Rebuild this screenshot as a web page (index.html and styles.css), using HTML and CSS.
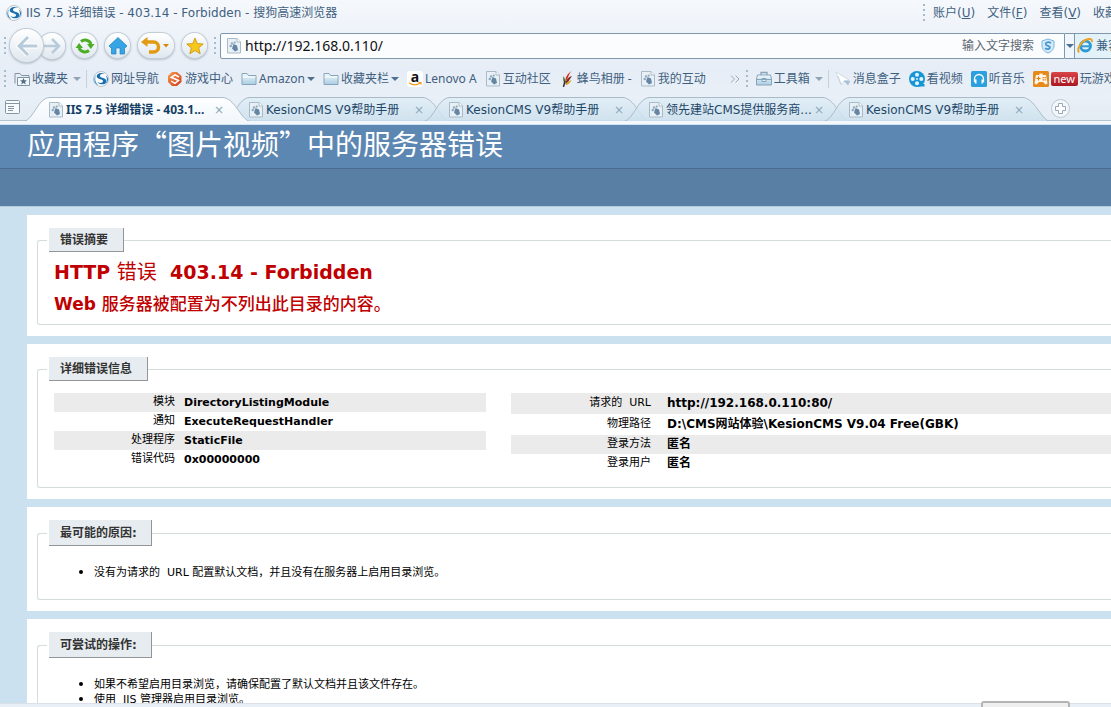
FILE: index.html
```html
<!DOCTYPE html>
<html lang="zh-CN">
<head>
<meta charset="utf-8">
<title>IIS 7.5 详细错误 - 403.14 - Forbidden</title>
<link rel="stylesheet" href="styles.css">
</head>
<body>
<svg class="defs" width="0" height="0" aria-hidden="true">
  <defs>
    <linearGradient id="fold" x1="0" y1="0" x2="0" y2="1"><stop offset="0" stop-color="#f2f9fd"/><stop offset="1" stop-color="#a9cde2"/></linearGradient>
    <linearGradient id="ball" x1="0" y1="0" x2="1" y2="1"><stop offset="0" stop-color="#f79a4c"/><stop offset="1" stop-color="#cf3a1c"/></linearGradient>
    <linearGradient id="tabfill" x1="0" y1="0" x2="0" y2="1"><stop offset="0" stop-color="#dfeef6"/><stop offset="1" stop-color="#cbe0ed"/></linearGradient>
    <linearGradient id="tabon" x1="0" y1="0" x2="0" y2="1"><stop offset="0" stop-color="#fdfeff"/><stop offset="1" stop-color="#f2f7fc"/></linearGradient>
    <symbol id="doc" viewBox="0 0 16 16">
      <path d="M1.500 .5h9.500l3.500 3.500v11h-13z" fill="#e9f0f5" stroke="#a9bac8"/>
      <path d="M11 .5v3.500h3.500" fill="#fff" stroke="#a9bac8"/>
      <path d="M7.500 6l3.500 1.500 1 4.500-3 1.500-3-3z" fill="#6485a3"/>
      <circle cx="4.800" cy="8" r="1.300" fill="#8fa9bf"/><circle cx="6" cy="5.400" r="1.200" fill="#8fa9bf"/><circle cx="8.700" cy="4.600" r="1.100" fill="#8fa9bf"/>
    </symbol>
    <symbol id="folder" viewBox="0 0 16 16">
      <path d="M1 13.500V2.500h5l1.500 2H15v9z" fill="url(#fold)" stroke="#86a5ba"/>
      <path d="M1.500 6h13" stroke="#fff"/>
    </symbol>
    <symbol id="sogou" viewBox="0 0 16 16">
      <circle cx="8" cy="8" r="7.500" fill="#fafcfd" stroke="#a8b5bf" stroke-width=".8"/>
      <path d="M12.500 3C8 .8 3.500 2.500 3.700 5.500c.2 3.500 7 2 6.300 5-.3 1.400-2.500 2-5.500.5 1.500 3 8.500 3.500 8.800-.8C13.500 6.200 7 7.500 7 4.700c0-1.700 3-2.200 5.500-1.700z" fill="#1b6fae"/>
      <path d="M3 4C0 8 1.500 13 5 14c-3-3-3.500-6-2-10zM12.500 4.500c2 2.500 2 6-.5 8.500 4-2 4-7 .5-8.500z" fill="#2a82c0"/>
    </symbol>
  </defs>
</svg>

<header class="chrome">
  <div class="titlebar">
    <svg class="ico"><use href="#sogou"/></svg>
    <span class="window-title">IIS 7.5 详细错误 - 403.14 - Forbidden - 搜狗高速浏览器</span>
    <nav class="menu">
      <i class="grip"></i>
      <button>账户(<u>U</u>)</button><button>文件(<u>F</u>)</button><button>查看(<u>V</u>)</button><button>收藏</button>
    </nav>
  </div>

  <div class="navbar">
    <i class="grip tall"></i>
    <div class="history">
      <button class="back" aria-label="后退"><svg width="26" height="26" viewBox="0 0 26 26"><path d="M14 4L5 13l9 9M6 13h17" fill="none" stroke="#fff" stroke-width="5"/><path d="M14 4L5 13l9 9M6 13h17" fill="none" stroke="#b7cbda" stroke-width="3"/></svg></button>
      <button class="forward" aria-label="前进"><svg width="18" height="18" viewBox="0 0 18 18"><path d="M9 2l7 7-7 7M15 9H1" fill="none" stroke="#b7cbda" stroke-width="2.500"/></svg></button>
    </div>
    <button class="round" aria-label="刷新"><svg width="20" height="20" viewBox="0 0 20 20"><path d="M6 5.500A6.500 6.500 0 0 1 16 8" fill="none" stroke="#4aad25" stroke-width="3"/><path d="M12 8h7.500l-3.700 5z" fill="#4aad25"/><path d="M14 14.500A6.500 6.500 0 0 1 4 12" fill="none" stroke="#4aad25" stroke-width="3"/><path d="M8 12H.5l3.700-5z" fill="#4aad25"/></svg></button>
    <button class="round" aria-label="主页"><svg width="20" height="20" viewBox="0 0 20 20"><path d="M10 1.500L19 10l-1.500 1.500H16.500V18h-4.500v-6H8v6H3.500v-6.500H2.500L1 10z" fill="#36a5e6" stroke="#1b7fc0" stroke-width=".7"/></svg></button>
    <button class="round wide" aria-label="撤销"><svg width="32" height="20" viewBox="0 0 32 20"><path d="M6 6h7.500a4.500 4.500 0 0 1 0 10H9" fill="none" stroke="#e39a12" stroke-width="3.500"/><path d="M1 6l6.500-5v10z" fill="#e39a12"/><path d="M23 8h6l-3 3.500z" fill="#d78a10"/></svg></button>
    <button class="round" aria-label="收藏"><svg width="20" height="20" viewBox="0 0 20 20"><path d="M10 2l2.300 5.600 6 .4-4.600 3.900 1.500 5.900L10 14.500l-5.200 3.300 1.500-5.900L1.700 8l6-.4z" fill="#f6c81c" stroke="#c98f0a" stroke-width=".8"/></svg></button>
    <i class="grip tall"></i>
    <div class="address">
      <svg class="ico"><use href="#doc"/></svg>
      <input class="url" aria-label="地址" value="http://192.168.0.110/">
      <span class="hint">输入文字搜索</span>
      <svg class="ico" viewBox="0 0 16 16"><path d="M8 1l6 2v5c0 3.500-3 6-6 7-3-1-6-3.500-6-7V3z" fill="#d5eaf8" stroke="#7db5dd"/><path d="M11 5C8.500 3.500 5.500 4.300 5.700 6.200 6 8.300 10 7.600 10 9.600c0 1.600-2.700 1.900-5 .7" fill="none" stroke="#4598d2" stroke-width="1.800"/></svg>
    </div>
    <button class="drop" aria-label="地址列表"><i class="caret"></i></button>
    <button class="compat"><svg class="ico" viewBox="0 0 16 16"><circle cx="8.500" cy="8" r="5" fill="none" stroke="#2d9ad8" stroke-width="2.800"/><path d="M5 8.300h8" stroke="#2d9ad8" stroke-width="2"/><path d="M2 14.500C-.5 11 4 3.500 9.500 1.500 13 .3 15.500 1 14.800 4" fill="none" stroke="#eda326" stroke-width="2"/></svg>兼容</button>
  </div>

  <div class="bookmarks">
    <i class="grip"></i>
    <button class="mark fav"><svg class="ico" viewBox="0 0 16 16"><path d="M1 12.500V2.500h5l1.500 2H15V14H3" fill="none" stroke="#7f93a5"/><path d="M3.500 6.500h12v8h-12z" fill="#f3f8fb" stroke="#7f93a5"/><path d="M9.500 7l1 2.300 2.500.1-2 1.600.8 2.500-2.300-1.400-2.300 1.400.8-2.500-2-1.600 2.500-.1z" fill="#4f6b85"/></svg>收藏夹<i class="caret soft"></i></button>
    <i class="sep"></i>
    <button class="mark"><svg class="ico"><use href="#sogou"/></svg>网址导航</button>
    <button class="mark"><svg class="ico" viewBox="0 0 16 16"><path d="M5 1h5l4.500 4v6L10 15H5L1 11V5z" fill="url(#ball)"/><path d="M12 6L8 3.800 4.200 6.300 11.500 9.500 8 12.300 4.200 10.200" fill="none" stroke="#fff" stroke-width="1.500"/></svg>游戏中心</button>
    <button class="mark"><svg class="ico"><use href="#folder"/></svg>Amazon<i class="caret"></i></button>
    <button class="mark"><svg class="ico"><use href="#folder"/></svg>收藏夹栏<i class="caret"></i></button>
    <button class="mark"><span class="amazon">a<svg width="14" height="4" viewBox="0 0 14 4"><path d="M1 .8c3.500 2.500 8 2.500 11 .3M10.500 .5h2.500v2" fill="none" stroke="#f39a1c" stroke-width="1.300"/></svg></span>Lenovo A</button>
    <button class="mark"><svg class="ico"><use href="#doc"/></svg>互动社区</button>
    <button class="mark"><svg class="ico" viewBox="0 0 16 16"><path d="M12.500 0C8 3 6 7 6.500 11 9 8 9 4 12.500 0z" fill="#d9261c"/><path d="M13 5C9 6 7 9 6.500 13c3-1 4-5 6.500-8z" fill="#7b2a20"/><path d="M12.500 9.500C9 9.500 7 12 6.500 14c3 0 4-2 6-4.500z" fill="#d9a12a"/><path d="M4.500 5c-1 4 0 6 1.500 8 1-3 0-5-1.500-8z" fill="#4d7a2d"/><path d="M6 10l-1.500 6" stroke="#333" stroke-width="1.500"/></svg>蜂鸟相册 -</button>
    <button class="mark"><svg class="ico"><use href="#doc"/></svg>我的互动</button>
    <button class="more" aria-label="更多"><svg width="10" height="8" viewBox="0 0 10 8"><path d="M1 .5L4.500 4 1 7.500M5.500 .5L9 4 5.500 7.500" fill="none" stroke="#98a9b8"/></svg></button>
    <i class="grip"></i>
    <button class="mark fav"><svg class="ico" viewBox="0 0 16 16"><path d="M5 4V1.500h6V4" fill="none" stroke="#86a5ba" stroke-width="1.300"/><path d="M1.500 4h13l1 4v6H.5V8z" fill="url(#fold)" stroke="#86a5ba"/><path d="M.5 8.500h15M6 7.500h4v3H6z" fill="#e6f2f9" stroke="#86a5ba"/></svg>工具箱<i class="caret soft"></i></button>
    <i class="sep"></i>
    <button class="mark"><svg class="ico" viewBox="0 0 16 16"><path d="M1 1l13 8-5 1-3 4z" fill="#fff" stroke="#c3d1dc" stroke-width=".7"/><path d="M3 5l3 8M9 10l4 4 2-4z" fill="#a9c2d5" stroke="#a9c2d5" stroke-width=".6"/></svg>消息盒子</button>
    <button class="mark"><svg class="ico" viewBox="0 0 16 16"><circle cx="8" cy="8" r="8" fill="#1795d4"/><path d="M9 13h6.500v2.500H9z" fill="#1795d4"/><g fill="#e5f5fd"><circle cx="8" cy="3.700" r="2"/><circle cx="8" cy="12.300" r="2"/><circle cx="3.700" cy="8" r="2"/><circle cx="12.300" cy="8" r="2"/><circle cx="8" cy="8" r=".9"/></g></svg>看视频</button>
    <button class="mark"><svg class="ico" viewBox="0 0 16 16"><rect width="16" height="16" rx="1.500" fill="#2ba0de"/><path d="M3.500 11V8a4.500 4.500 0 0 1 9 0v3" fill="none" stroke="#fff" stroke-width="1.300"/><path d="M3 8.500h2.500v4H4zM13 8.500h-2.500v4H12z" fill="#fff"/></svg>听音乐</button>
    <button class="mark"><svg class="ico" viewBox="0 0 16 16"><rect width="16" height="16" rx="1.500" fill="#e58a1b"/><path d="M3 4h3l.8-1.500h2.400L10 4h3l1.500 8.500-2 1-2.500-2.500H6L3.500 13.500l-2-1z" fill="#fff6e6"/><path d="M3.500 7.500h4M5.500 5.500v4" stroke="#e07c10" stroke-width="1.200"/><path d="M9.500 6h1.300v1.300H9.500zM11.500 6h1.300v1.300h-1.300zM9.500 8.200h1.300v1.300H9.500zM11.500 8.200h1.300v1.300h-1.300z" fill="#e07c10"/></svg><span class="new">new</span>玩游戏</button>
  </div>

  <div class="tabs">
    <button class="tablist" aria-label="标签列表"><svg width="15" height="14" viewBox="0 0 15 14"><rect x=".5" y=".5" width="14" height="13" rx="1" fill="#f8fbfd" stroke="#8496a6"/><path d="M1 3.500h13M3 6.500h6M3 8.500h6M3 10.500h5" stroke="#8496a6"/></svg></button>
    <div class="tab on"><svg class="shape" viewBox="0 0 226 25" preserveAspectRatio="none"><path d="M0 24.500C10 22 14 .5 26 .5H198C211 .5 216 22 226 24.500"/></svg><svg class="ico"><use href="#doc"/></svg><span class="label">IIS 7.5 详细错误 - 403.1...</span><button class="close" aria-label="关闭">×</button></div>
    <div class="tab"><svg class="shape" viewBox="0 0 226 25" preserveAspectRatio="none"><path d="M0 24.500C10 22 14 .5 26 .5H198C211 .5 216 22 226 24.500"/></svg><svg class="ico"><use href="#doc"/></svg><span class="label">KesionCMS V9帮助手册</span><button class="close" aria-label="关闭">×</button></div>
    <div class="tab"><svg class="shape" viewBox="0 0 226 25" preserveAspectRatio="none"><path d="M0 24.500C10 22 14 .5 26 .5H198C211 .5 216 22 226 24.500"/></svg><svg class="ico"><use href="#doc"/></svg><span class="label">KesionCMS V9帮助手册</span><button class="close" aria-label="关闭">×</button></div>
    <div class="tab"><svg class="shape" viewBox="0 0 226 25" preserveAspectRatio="none"><path d="M0 24.500C10 22 14 .5 26 .5H198C211 .5 216 22 226 24.500"/></svg><svg class="ico"><use href="#doc"/></svg><span class="label">领先建站CMS提供服务商...</span><button class="close" aria-label="关闭">×</button></div>
    <div class="tab"><svg class="shape" viewBox="0 0 226 25" preserveAspectRatio="none"><path d="M0 24.500C10 22 14 .5 26 .5H198C211 .5 216 22 226 24.500"/></svg><svg class="ico"><use href="#doc"/></svg><span class="label">KesionCMS V9帮助手册</span><button class="close" aria-label="关闭">×</button></div>
    <button class="newtab" aria-label="新标签"><svg width="19" height="19" viewBox="0 0 19 19"><circle cx="9.500" cy="9.500" r="9" fill="#f3f7fa" stroke="#bcc8d2"/><path d="M7.500 4.500h4v3h3v4h-3v3h-4v-3h-3v-4h3z" fill="#fff" stroke="#98a9b8"/></svg></button>
  </div>
</header>

<main class="page">
  <div class="banner"><h1>应用程序“图片视频”中的服务器错误</h1></div>
  <div class="subbar"></div>
  <div class="content">
    <section class="card">
      <fieldset class="box">
        <legend>错误摘要</legend>
        <h2>HTTP <span class="cjk">错误</span>&nbsp; 403.14 - Forbidden</h2>
        <h3>Web <span class="cjk">服务器被配置为不列出此目录的内容。</span></h3>
      </fieldset>
    </section>
    <section class="card">
      <fieldset class="box">
        <legend>详细错误信息</legend>
        <div class="details">
          <table class="first">
            <tr class="alt"><th scope="row">模块</th><td>DirectoryListingModule</td></tr>
            <tr><th scope="row">通知</th><td>ExecuteRequestHandler</td></tr>
            <tr class="alt"><th scope="row">处理程序</th><td>StaticFile</td></tr>
            <tr><th scope="row">错误代码</th><td>0x00000000</td></tr>
          </table>
          <table class="second">
            <tr class="alt roomy"><th scope="row">请求的&nbsp; URL</th><td>http://192.168.0.110:80/</td></tr>
            <tr class="roomy"><th scope="row">物理路径</th><td>D:\CMS网站体验\KesionCMS V9.04 Free(GBK)</td></tr>
            <tr class="alt"><th scope="row">登录方法</th><td>匿名</td></tr>
            <tr><th scope="row">登录用户</th><td>匿名</td></tr>
          </table>
        </div>
      </fieldset>
    </section>
    <section class="card">
      <fieldset class="box">
        <legend class="high">最可能的原因:</legend>
        <ul><li>没有为请求的&nbsp; URL 配置默认文档，并且没有在服务器上启用目录浏览。</li></ul>
      </fieldset>
    </section>
    <section class="card">
      <fieldset class="box">
        <legend class="high">可尝试的操作:</legend>
        <ul><li>如果不希望启用目录浏览，请确保配置了默认文档并且该文件存在。</li><li>使用&nbsp; IIS 管理器启用目录浏览。</li></ul>
      </fieldset>
    </section>
  </div>
</main>
<footer class="status"><div class="popup"></div></footer>
</body>
</html>
```

FILE: styles.css
```css
* { box-sizing: border-box; }
body {
  margin: 0;
  height: 100vh;
  overflow: hidden;
  display: flex;
  flex-direction: column;
  font: 12px/16px "Noto Sans", "Noto Sans CJK SC", sans-serif;
  color: #3f5f80;
}
button {
  border: 0;
  padding: 0;
  background: none;
  font: inherit;
  color: inherit;
  white-space: nowrap;
  flex: none;
}
.defs { position: absolute; }
.ico { width: 16px; height: 16px; flex: none; }

/* browser chrome */
.chrome {
  flex: none;
  background: linear-gradient(#f5f8fc, #e6edf6 70px, #e9f0f7 96px, #e2ebf3);
  border-bottom: 1px solid #cfe3f2;
}
.grip {
  flex: none;
  width: 2px;
  height: 18px;
  background: repeating-linear-gradient(#a3bccb 0 2px, transparent 2px 5px);
}
.sep { flex: none; width: 1px; height: 18px; background: #c5d1dc; }
.caret {
  flex: none;
  border: 4px solid transparent;
  border-top-color: #4f6f8e;
  border-bottom: 0;
}
.soft { border-top-color: #92a4b4; margin-left: 3px; }

.titlebar, .tabs { font-family: "DejaVu Sans", "Noto Sans CJK SC", sans-serif; }
.titlebar { display: flex; align-items: center; height: 26px; padding-left: 6px; gap: 4px; overflow: hidden; }
.window-title { flex: 1; white-space: nowrap; }
.menu { display: flex; align-items: center; gap: 12px; width: 188px; flex: none; }
.menu .grip { margin-right: -4px; }

.navbar { display: flex; align-items: center; height: 39px; padding-left: 4px; overflow: hidden; }
.history { display: flex; align-items: center; margin: 0 7px 0 4px; }
.back, .forward, .round {
  display: flex;
  align-items: center;
  justify-content: center;
  border-radius: 17px;
  background: linear-gradient(#fff, #dfe8ef);
  box-shadow: 0 0 0 1px #c3cdd6, 0 1px 3px #8594a3;
}
.back { width: 33px; height: 33px; position: relative; z-index: 1; }
.forward { width: 26px; height: 26px; margin-left: -4px; }
.round { width: 25px; height: 25px; margin-right: 8px; }
.wide { width: 36px; }
.navbar .round + .grip { margin: 0 4px 0 -1px; }
.address {
  flex: 1;
  display: flex;
  align-items: center;
  gap: 3px;
  height: 26px;
  padding: 0 8px 0 5px;
  border: 1px solid #7e97ac;
  border-radius: 2px 0 0 2px;
  background: #fafcfe;
}
.url { flex: 1; min-width: 0; border: 0; padding: 0; background: none; color: #111; font: 14px/20px "Noto Sans", sans-serif; outline: 0; }
.hint { color: #5c6670; margin-right: 3px; }
.drop { width: 10px; height: 26px; border: 1px solid #7e97ac; border-left: 0; display: flex; align-items: center; justify-content: center; background: #f0f6fb; }
.compat { display: flex; align-items: center; gap: 3px; width: 36px; height: 26px; padding-left: 2px; border: solid #7e97ac; border-width: 1px 0; background: #e3f1f8; overflow: hidden; }

.bookmarks { display: flex; align-items: center; gap: 8px; height: 27px; padding-left: 4px; overflow: hidden; }
.mark { display: flex; align-items: center; gap: 2px; }
.fav { margin-right: -3px; }
.bookmarks .sep { margin-right: -2px; }
.more { margin-left: 16px; margin-right: -2px; display: flex; }
.amazon {
  width: 16px;
  height: 16px;
  border-radius: 3px;
  background: #fff;
  color: #111;
  font: bold 14px/11px "Noto Sans", sans-serif;
  display: flex;
  flex-direction: column;
  align-items: center;
}
.new {
  width: 27px;
  border-radius: 2px;
  background: linear-gradient(#d8464a, #a91720);
  color: #fff;
  font-size: 11px;
  line-height: 14px;
  text-align: center;
}

.tabs { display: flex; height: 32px; padding-top: 5px; border-bottom: 3px solid #f3f7fc; background: linear-gradient(transparent 28px, #b3c2cf 28px); overflow: hidden; }
.tablist { display: flex; margin: 3px 4px 0 5px; height: 14px; }
.tab {
  position: relative;
  flex: none;
  display: flex;
  align-items: center;
  gap: 2px;
  width: 200px;
  height: 24px;
  padding: 2px 0 0 24px;
  color: #1f4668;
}
.shape { position: absolute; left: 0; top: 0; width: 226px; height: 25px; fill: url(#tabfill); fill-opacity: .8; stroke: #aabac8; }
.tab .ico, .label, .close { position: relative; }
.on { z-index: 1; color: #123d63; }
.on .shape { fill: url(#tabon); fill-opacity: 1; }
.on .label { font-family: "Noto Sans", "Noto Sans CJK SC", sans-serif; font-weight: bold; }
.label { flex: 1; white-space: nowrap; }
.close { width: 10px; font-size: 12px; color: #8aa7bb; }
.newtab { margin: 2px 0 0 27px; height: 19px; }

/* error page */
.page {
  flex: 1;
  min-height: 0;
  overflow: hidden;
  background: #cbe1ef;
  color: #000;
  font: 11px/15px "DejaVu Sans", "Noto Sans CJK SC", sans-serif;
}
.banner { height: 44px; padding-left: 27px; background: #5c87b2; border-bottom: 1px solid #4b6c90; }
.banner h1 { margin: 0; color: #fff; font: 400 28px/37px "Noto Sans CJK SC", sans-serif; white-space: nowrap; }
.subbar { height: 38px; background: #5a7fa5; border-bottom: 1px solid #b4cbdc; }
.content { display: flex; flex-direction: column; gap: 8px; padding: 8px 0 0 27px; }
.card { padding: 13px 0 11px 10px; background: #fff; }
.box { margin: 0; min-width: 0; padding: 0 0 0 16px; border: 1px solid #d5dcde; border-right: 0; border-radius: 3px 0 0 3px; }
legend {
  margin-left: -5px;
  padding: 1px 15px 0 11px;
  border: solid #949599;
  border-width: 0 1px 1px 0;
  background: #e7ecf0;
  color: #333;
  font-size: 12px;
  font-weight: bold;
  line-height: 22px;
  box-shadow: -2px 0 #fff;
}
.high { padding: 2px 14px 0 11px; line-height: 23px; }
h2, h3 { margin: 0; color: #c00000; font-weight: bold; }
h2 { margin-top: 8px; font-size: 19px; line-height: 24px; }
h3 { margin: 10px 0; font-size: 17px; line-height: 20px; }
h2 .cjk { font-weight: 400; font-size: 20px; }
h3 .cjk { font-weight: 500; }
.details { display: grid; grid-template-columns: 432fr 600fr; gap: 25px; align-items: start; margin: 12px 0 14px; }
table { width: 100%; border-collapse: collapse; table-layout: fixed; }
th, td { padding: 0; vertical-align: top; white-space: nowrap; }
th { width: 121px; text-align: right; font-weight: 400; line-height: 18px; }
td { padding-left: 9px; font-weight: bold; line-height: 19px; }
.second th { width: 140px; }
.second td { padding-left: 16px; font-size: 12px; }
.roomy td { line-height: 21px; }
.roomy th { line-height: 20px; }
.alt { background: #ebebeb; }
ul { margin: 18px 0 20px; padding-left: 40px; }
li { height: 15px; }
li::marker { font-size: 13px; }

.status { position: relative; flex: none; height: 4px; background: #e8eff7; border-top: 1px solid #dbe1e6; }
.popup { position: absolute; right: 41px; bottom: 0; width: 89px; height: 6px; border: 2px solid #b4b4b4; border-bottom: 0; border-radius: 3px 3px 0 0; background: #efefef; }
```
